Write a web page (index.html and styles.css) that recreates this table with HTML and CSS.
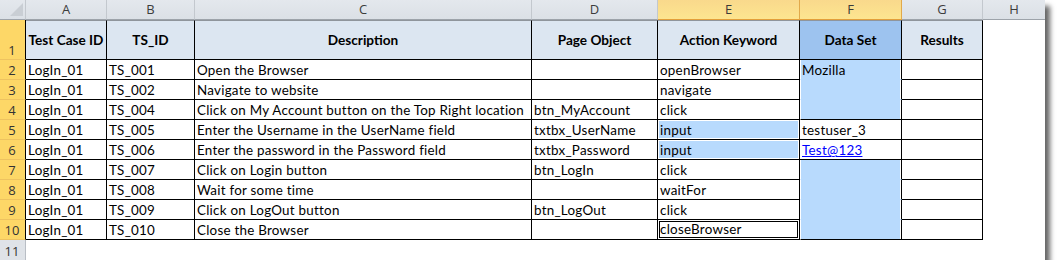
FILE: index.html
```html
<!DOCTYPE html>
<html>
<head>
<meta charset="utf-8">
<link rel="stylesheet" href="styles.css">
</head>
<body>
<div class="sheet">
  <div class="ch corner"><span class="tri"></span></div>
  <div class="ch">A</div>
  <div class="ch">B</div>
  <div class="ch">C</div>
  <div class="ch">D</div>
  <div class="ch sel">E</div>
  <div class="ch sel">F</div>
  <div class="ch">G</div>
  <div class="ch last">H</div>

  <div class="rh">1</div>
  <div class="c hd first">Test Case ID</div>
  <div class="c hd">TS_ID</div>
  <div class="c hd">Description</div>
  <div class="c hd">Page Object</div>
  <div class="c hd">Action Keyword</div>
  <div class="c hd hdsel">Data Set</div>
  <div class="c hd">Results</div>
  <div class="c none"></div>

  <div class="rh">2</div>
  <div class="c first">LogIn_01</div>
  <div class="c">TS_001</div>
  <div class="c">Open the Browser</div>
  <div class="c"></div>
  <div class="c">openBrowser</div>
  <div class="c fsel">Mozilla</div>
  <div class="c"></div>
  <div class="c none"></div>

  <div class="rh">3</div>
  <div class="c first">LogIn_01</div>
  <div class="c">TS_002</div>
  <div class="c">Navigate to website</div>
  <div class="c"></div>
  <div class="c">navigate</div>
  <div class="c fsel"></div>
  <div class="c"></div>
  <div class="c none"></div>

  <div class="rh">4</div>
  <div class="c first">LogIn_01</div>
  <div class="c">TS_004</div>
  <div class="c">Click on My Account button on the Top Right location</div>
  <div class="c">btn_MyAccount</div>
  <div class="c">click</div>
  <div class="c fsel fend"></div>
  <div class="c"></div>
  <div class="c none"></div>

  <div class="rh">5</div>
  <div class="c first">LogIn_01</div>
  <div class="c">TS_005</div>
  <div class="c">Enter the Username in the UserName field</div>
  <div class="c">txtbx_UserName</div>
  <div class="c esel"><span class="fill">input</span></div>
  <div class="c">testuser_3</div>
  <div class="c"></div>
  <div class="c none"></div>

  <div class="rh">6</div>
  <div class="c first">LogIn_01</div>
  <div class="c">TS_006</div>
  <div class="c">Enter the password in the Password field</div>
  <div class="c">txtbx_Password</div>
  <div class="c esel"><span class="fill">input</span></div>
  <div class="c"><a class="link" href="#">Test@123</a></div>
  <div class="c"></div>
  <div class="c none"></div>

  <div class="rh">7</div>
  <div class="c first">LogIn_01</div>
  <div class="c">TS_007</div>
  <div class="c">Click on Login button</div>
  <div class="c">btn_LogIn</div>
  <div class="c">click</div>
  <div class="c fsel"></div>
  <div class="c"></div>
  <div class="c none"></div>

  <div class="rh">8</div>
  <div class="c first">LogIn_01</div>
  <div class="c">TS_008</div>
  <div class="c">Wait for some time</div>
  <div class="c"></div>
  <div class="c">waitFor</div>
  <div class="c fsel"></div>
  <div class="c"></div>
  <div class="c none"></div>

  <div class="rh">9</div>
  <div class="c first">LogIn_01</div>
  <div class="c">TS_009</div>
  <div class="c">Click on LogOut button</div>
  <div class="c">btn_LogOut</div>
  <div class="c">click</div>
  <div class="c fsel"></div>
  <div class="c"></div>
  <div class="c none"></div>

  <div class="rh">10</div>
  <div class="c first">LogIn_01</div>
  <div class="c">TS_010</div>
  <div class="c">Close the Browser</div>
  <div class="c"></div>
  <div class="c active"><span class="box">closeBrowser</span></div>
  <div class="c fsel fend"></div>
  <div class="c"></div>
  <div class="c none"></div>

  <div class="rh grey">11</div>
  <div class="blank"></div>
</div>
</body>
</html>
```
FILE: styles.css
```css
html, body {
  margin: 0;
  padding: 0;
  background: #ffffff;
}
body {
  font-family: "Lato", "Liberation Sans", sans-serif;
}
.sheet {
  display: grid;
  grid-template-columns: 26px 81px 88px 337px 126px 142px 102px 81px 62px;
  grid-template-rows: 20px 40px repeat(10, 20px) 20px;
  width: 1045px;
  height: 260px;
  background: #ffffff;
  box-shadow: 5px 6px 5px rgba(0, 0, 0, 0.6);
}
.ch {
  box-sizing: border-box;
  background: linear-gradient(#e4e8ed, #dbe0e6);
  border-right: 1px solid #c3c8ce;
  border-bottom: 1px solid #9da3aa;
  font-family: "Open Sans", "Liberation Sans", sans-serif;
  font-size: 13px;
  color: #3c3c3c;
  display: flex;
  align-items: center;
  justify-content: center;
  line-height: 19px;
}
.ch.last {
  border-right: none;
}
.ch.corner {
  position: relative;
}
.tri {
  position: absolute;
  right: 2px;
  bottom: 3px;
  width: 0;
  height: 0;
  border-left: 13px solid transparent;
  border-bottom: 13px solid #c9ced4;
}
.ch.sel {
  background: linear-gradient(#f9d98c, #fde58f);
  border-right: 1px solid #e1a94a;
  border-bottom: 1px solid #e39f3a;
  color: #3a3a3a;
}
.rh {
  box-sizing: border-box;
  background: #fdd767;
  border-bottom: 1px solid #eec360;
  border-right: 1px solid #000000;
  font-family: "Open Sans", "Liberation Sans", sans-serif;
  font-size: 13px;
  color: #333333;
  display: flex;
  align-items: flex-end;
  justify-content: center;
  line-height: 18px;
  padding-right: 1px;
}
.rh.grey {
  background: #dfe3e8;
  border-bottom: none;
  border-right: 1px solid #b9bec5;
}
.blank {
  grid-column: 2 / 10;
  background: #ffffff;
}
.c {
  box-sizing: border-box;
  border-right: 1px solid #000000;
  border-bottom: 1px solid #000000;
  font-size: 13.4px;
  letter-spacing: 0.25px;
  line-height: 19px;
  padding: 1px 2px 0 2px;
  color: #000000;
  white-space: nowrap;
  overflow: hidden;
  background: #ffffff;
}
.c.none {
  border: none;
}
.c.hd {
  background: #dce6f1;
  font-weight: bold;
  font-size: 13.6px;
  letter-spacing: 0;
  padding: 0 2px;
  display: flex;
  align-items: center;
  justify-content: center;
  border-top: 1px solid #8f959c;
}
.c.hd.hdsel {
  background: #9dc3ef;
}
.c.fsel {
  background: #b8dafd;
  border-bottom-color: #b8dafd;
  border-left: 1px solid #ffffff;
  border-right: 1px solid #000000;
  box-shadow: inset -1px 0 0 #ffffff;
  padding-left: 1px;
}
.c.fsel.fend {
  border-bottom-color: #000000;
}
.c.esel {
  padding: 1px;
  display: flex;
}
.fill {
  flex: 1;
  background: #b8dafd;
  padding: 1px 0 0 1px;
  line-height: 16px;
}
.c.active {
  padding: 1px;
  display: flex;
}
.box {
  flex: 1;
  border: 1px solid #000000;
  line-height: 15px;
  padding-left: 0;
}
.link {
  color: #0000ff;
  text-decoration: underline;
}
```
